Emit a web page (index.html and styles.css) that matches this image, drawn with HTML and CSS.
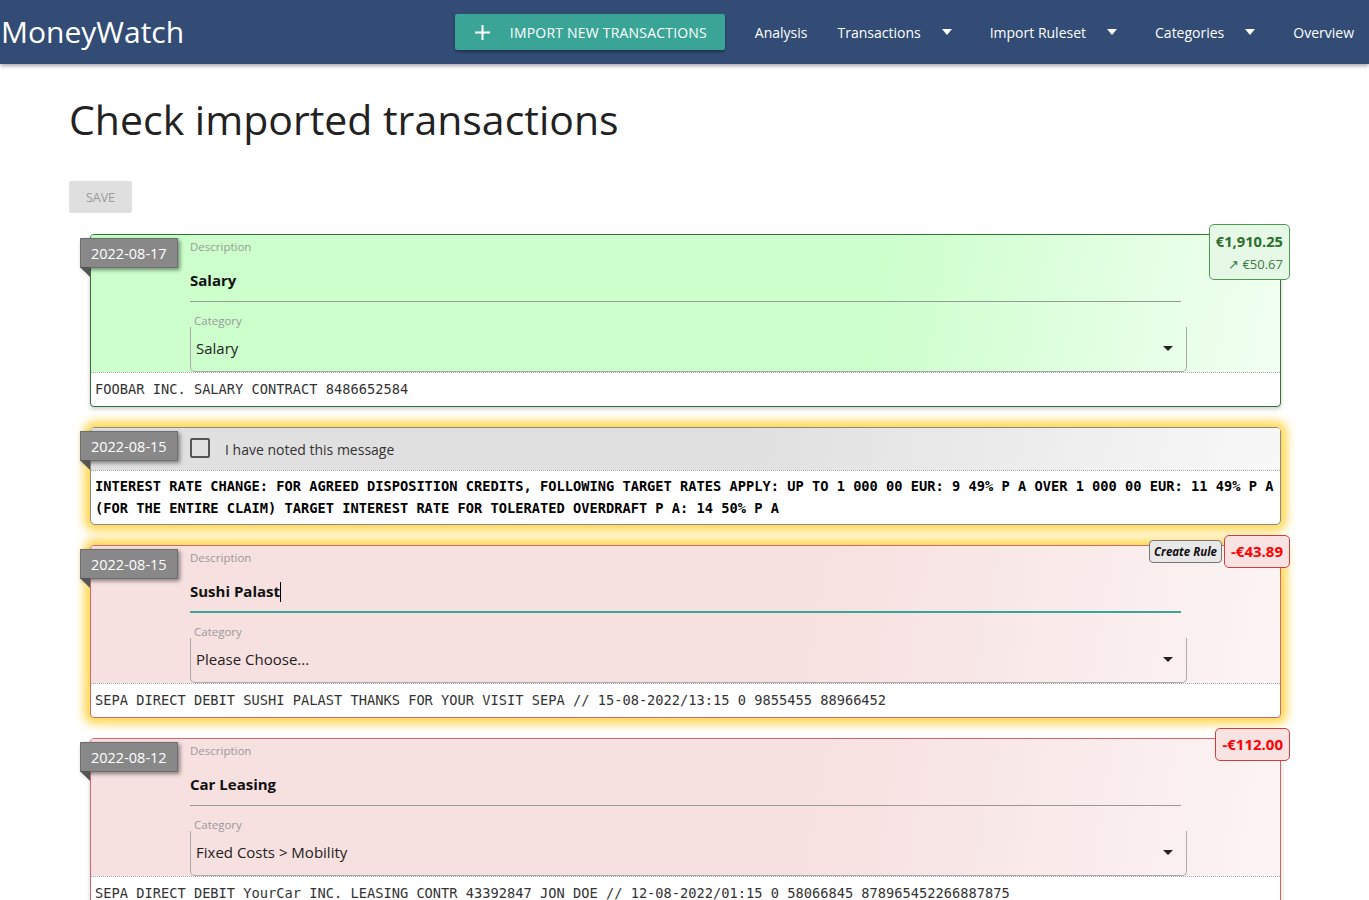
FILE: index.html
```html
<!DOCTYPE html>
<html lang="en">
  <head>
    <meta charset="UTF-8" />
    <meta name="viewport" content="width=device-width, initial-scale=1.0" />
    <title>MoneyWatch</title>

    <link rel="stylesheet" href="styles.css">
  </head>
  <body>
    <header class="navbar">
      <div class="brand">MoneyWatch</div>

      <nav class="nav">
        <button class="importBtn">
          <svg class="plus" width="15" height="15" viewBox="0 0 15 15">
            <path d="M7.5 0v15M0 7.5h15" stroke="#fff" stroke-width="2" fill="none" />
          </svg>
          Import new transactions
        </button>

        <a class="navItem">Analysis</a>
        <a class="navItem dropdown">Transactions <span class="navCaret"></span></a>
        <a class="navItem dropdown">Import Ruleset <span class="navCaret"></span></a>
        <a class="navItem dropdown">Categories <span class="navCaret"></span></a>
        <a class="navItem">Overview</a>
      </nav>
    </header>

    <main class="page">
      <h1>Check imported transactions</h1>

      <button class="saveBtn" disabled>Save</button>

      <div class="transactions">
        <!-- income -->
        <div class="card income">
          <span class="dateTag">2022-08-17</span>

          <div class="cardActions">
            <div class="amount plus">
              <div class="sum">€1,910.25</div>
              <div class="balance">↗ €50.67</div>
            </div>
          </div>

          <div class="cardMain">
            <div class="fieldLabel">Description</div>
            <div class="descInput">Salary</div>

            <div class="fieldLabel catLabel">Category</div>
            <div class="select">
              <span>Salary</span>
              <span class="selCaret"></span>
            </div>
          </div>

          <div class="cardText">FOOBAR INC. SALARY CONTRACT 8486652584</div>
        </div>

        <!-- message -->
        <div class="card message flagged">
          <span class="dateTag">2022-08-15</span>

          <div class="cardMain msgRow">
            <span class="checkbox"></span>
            <span class="msgLabel">I have noted this message</span>
          </div>

          <div class="cardText msgText">INTEREST RATE CHANGE: FOR AGREED DISPOSITION CREDITS, FOLLOWING TARGET RATES APPLY: UP TO 1 000 00 EUR: 9 49% P A OVER 1 000 00 EUR: 11 49% P A (FOR THE ENTIRE CLAIM) TARGET INTEREST RATE FOR TOLERATED OVERDRAFT P A: 14 50% P A</div>
        </div>

        <!-- expense, focused -->
        <div class="card expense flagged">
          <span class="dateTag">2022-08-15</span>

          <div class="cardActions">
            <button class="ruleBtn">Create Rule</button>
            <div class="amount minus">
              <div class="sum">-€43.89</div>
            </div>
          </div>

          <div class="cardMain">
            <div class="fieldLabel">Description</div>
            <div class="descInput focused">Sushi Palast<span class="textCaret"></span></div>

            <div class="fieldLabel catLabel">Category</div>
            <div class="select">
              <span>Please Choose...</span>
              <span class="selCaret"></span>
            </div>
          </div>

          <div class="cardText">SEPA DIRECT DEBIT SUSHI PALAST THANKS FOR YOUR VISIT SEPA // 15-08-2022/13:15 0 9855455 88966452</div>
        </div>

        <!-- expense -->
        <div class="card expense">
          <span class="dateTag">2022-08-12</span>

          <div class="cardActions">
            <div class="amount minus">
              <div class="sum">-€112.00</div>
            </div>
          </div>

          <div class="cardMain">
            <div class="fieldLabel">Description</div>
            <div class="descInput">Car Leasing</div>

            <div class="fieldLabel catLabel">Category</div>
            <div class="select">
              <span>Fixed Costs &gt; Mobility</span>
              <span class="selCaret"></span>
            </div>
          </div>

          <div class="cardText">SEPA DIRECT DEBIT YourCar INC. LEASING CONTR 43392847 JON DOE // 12-08-2022/01:15 0 58066845 878965452266887875</div>
        </div>
      </div>
    </main>
  </body>
</html>
```

FILE: styles.css
```css
* {
  margin: 0;
  padding: 0;
  box-sizing: border-box;
}

body {
  font-family: "Open Sans", "Noto Sans", sans-serif;
  color: #222;
  background: #fff;
}

/* top bar */
.navbar {
  display: flex;
  align-items: center;
  height: 64px;
  background: #324c76;
  box-shadow: 0 2px 4px rgba(0, 0, 0, 0.35);
  color: #fff;
  position: relative;
  z-index: 2;
}

.brand {
  font-size: 30px;
  padding-left: 1px;
  padding-bottom: 2px;
}

.nav {
  display: flex;
  align-items: center;
  margin-left: auto;
}

.importBtn {
  display: flex;
  align-items: center;
  height: 36px;
  width: 270px;
  padding: 0 0 0 20px;
  margin-right: 15px;
  border: none;
  border-radius: 2px;
  background: #3aa597;
  color: #fff;
  font-family: inherit;
  font-size: 14px;
  letter-spacing: 0.2px;
  text-transform: uppercase;
  box-shadow: 0 2px 3px rgba(0, 0, 0, 0.35);
}

.importBtn .plus {
  margin-right: 20px;
}

.navItem {
  display: flex;
  align-items: center;
  padding: 0 15px;
  font-size: 14px;
  color: #fff;
}

.navCaret {
  display: inline-block;
  margin: 0 8px 0 21px;
  border-left: 5px solid transparent;
  border-right: 5px solid transparent;
  border-top: 6px solid #fff;
}

/* page */
.page {
  padding: 0 69px 40px;
}

h1 {
  font-size: 41px;
  font-weight: 400;
  line-height: 50px;
  color: #222;
  margin: 30px 0 37px;
}

.saveBtn {
  display: block;
  width: 63px;
  height: 32px;
  border: none;
  border-radius: 2px;
  background: #dfdfdf;
  color: #9a9a9a;
  font-family: inherit;
  font-size: 12.5px;
  text-transform: uppercase;
}

.transactions {
  display: flex;
  flex-direction: column;
  gap: 20px;
  margin: 21px 19px 0 21px;
}

.card {
  position: relative;
  border: 1px solid #888;
  border-radius: 4px;
  background: #fff;
  box-shadow: 0 2px 4px rgba(0, 0, 0, 0.2);
}

.card.income {
  border-color: #33703a;
}

.card.expense {
  border-color: #cc6a6a;
}

.card.flagged {
  box-shadow: 0 0 10px 6px rgba(255, 206, 40, 0.8);
}

.dateTag {
  position: absolute;
  left: -11px;
  top: 3px;
  height: 30px;
  line-height: 30px;
  padding: 0 10px;
  background: #888;
  border: 1px solid #6e6e6e;
  color: #fff;
  font-size: 14.5px;
  box-shadow: 2px 2px 4px rgba(0, 0, 0, 0.45);
  z-index: 1;
}

.dateTag::after {
  content: "";
  position: absolute;
  left: -1px;
  top: 100%;
  border-top: 10px solid #555;
  border-left: 10px solid transparent;
}

.cardActions {
  position: absolute;
  top: -11px;
  right: -10px;
  display: flex;
  align-items: center;
  gap: 2px;
}

.amount {
  border: 1px solid;
  border-radius: 5px;
  padding: 4px 6px;
  text-align: right;
  font-weight: 700;
}

.amount.plus {
  background: #e6f9e6;
  border-color: #4c9a4c;
  color: #2b6e2b;
}

.amount.minus {
  background: #f8e2e2;
  border-color: #d23c3c;
  color: #ff0000;
  line-height: 23px;
  font-size: 15px;
}

.amount.plus .sum {
  font-size: 14.7px;
  line-height: 24px;
}

.amount .balance {
  font-size: 13px;
  font-weight: 400;
  line-height: 22px;
  color: #3a7a4a;
}

.ruleBtn {
  height: 23px;
  padding: 0 4px;
  border: 1px solid #777;
  border-radius: 4px;
  background: #e8e8e8;
  color: #111;
  font-family: inherit;
  font-size: 11.5px;
  font-weight: 700;
  font-style: italic;
}

.cardMain {
  padding: 5px 99px 0;
  border-radius: 3px 3px 0 0;
}

.income .cardMain {
  background: linear-gradient(100deg, #ccffcc 65%, #f2fff2 100%);
}

.expense .cardMain {
  background: linear-gradient(100deg, #f7e0e0 60%, #fcf4f4 100%);
}

.fieldLabel {
  font-size: 11.5px;
  line-height: 14px;
  color: #999;
}

.descInput {
  padding: 15px 0 10px;
  line-height: 22px;
  font-size: 15px;
  font-weight: 700;
  color: #111;
  border-bottom: 1px solid #999;
}

.descInput.focused {
  border-bottom: 2px solid #3aa597;
  padding-bottom: 9px;
}

.textCaret {
  display: inline-block;
  width: 1px;
  height: 20px;
  background: #000;
  vertical-align: -5px;
}

.catLabel {
  margin-top: 12px;
  line-height: 13px;
  padding-left: 4px;
}

.select {
  display: flex;
  align-items: center;
  justify-content: space-between;
  height: 45px;
  margin-right: -6px;
  padding: 0 13px 2px 5px;
  border: 1px solid #aaa;
  border-top: none;
  border-radius: 0 0 5px 5px;
  font-size: 15px;
  color: #222;
}

.selCaret {
  border-left: 5px solid transparent;
  border-right: 5px solid transparent;
  border-top: 5px solid #222;
}

.cardText {
  border-top: 1px dotted #aaa;
  padding: 0 4px;
  line-height: 33px;
  font-family: "DejaVu Sans Mono", "Liberation Mono", monospace;
  font-size: 13.7px;
  color: #333;
}

/* message card */
.message {
  border-radius: 5px;
}

.msgRow {
  display: flex;
  align-items: center;
  height: 42px;
  padding-top: 0;
  background: linear-gradient(100deg, #e0e0e0 55%, #f8f8f8 100%);
}

.checkbox {
  width: 20px;
  height: 20px;
  border: 2px solid #555;
  border-radius: 2px;
  margin-top: -3px;
}

.msgLabel {
  margin-left: 15px;
  font-size: 14px;
  color: #333;
}

.msgText {
  padding: 4px 4px 5px;
  line-height: 22px;
  font-weight: 700;
  color: #000;
}
```
